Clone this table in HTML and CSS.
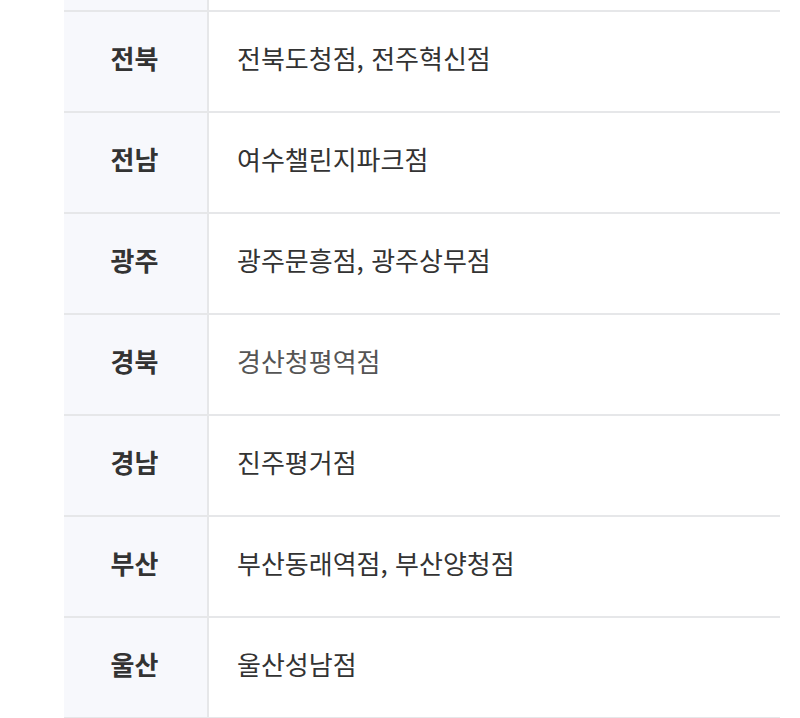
FILE: index.html
```html
<!DOCTYPE html>
<html lang="ko">
<head>
<meta charset="utf-8">
<link rel="stylesheet" href="styles.css">
</head>
<body>
<div class="table">
  <div class="row"><div class="label"></div><div class="value"></div></div>
  <div class="row"><div class="label">전북</div><div class="value">전북도청점, 전주혁신점</div></div>
  <div class="row"><div class="label">전남</div><div class="value">여수챌린지파크점</div></div>
  <div class="row"><div class="label">광주</div><div class="value">광주문흥점, 광주상무점</div></div>
  <div class="row"><div class="label">경북</div><div class="value light">경산청평역점</div></div>
  <div class="row"><div class="label">경남</div><div class="value">진주평거점</div></div>
  <div class="row"><div class="label">부산</div><div class="value">부산동래역점, 부산양청점</div></div>
  <div class="row"><div class="label">울산</div><div class="value">울산성남점</div></div>
</div>
</body>
</html>
```
FILE: styles.css
```css
html, body {
  margin: 0;
  padding: 0;
  background: #ffffff;
  overflow: hidden;
}
body {
  font-family: "Noto Sans CJK KR", "Noto Sans", sans-serif;
  color: #333333;
}
.table {
  margin: -89px 0 0 64px;
  width: 716px;
}
.row {
  display: grid;
  grid-template-columns: 145px 1fr;
  height: 101px;
  box-sizing: border-box;
  border-bottom: 2px solid #e6e7e9;
}
.label {
  box-sizing: border-box;
  background: #f7f8fc;
  border-right: 2px solid #e6e7e9;
  display: flex;
  align-items: center;
  justify-content: center;
  font-size: 26px;
  font-weight: 700;
  color: #333333;
  padding: 0 2px 8px 0;
}
.value {
  display: flex;
  align-items: center;
  padding: 0 0 8px 28px;
  font-size: 26px;
  font-weight: 400;
  color: #333333;
}
.value.light {
  color: #555555;
}
```
